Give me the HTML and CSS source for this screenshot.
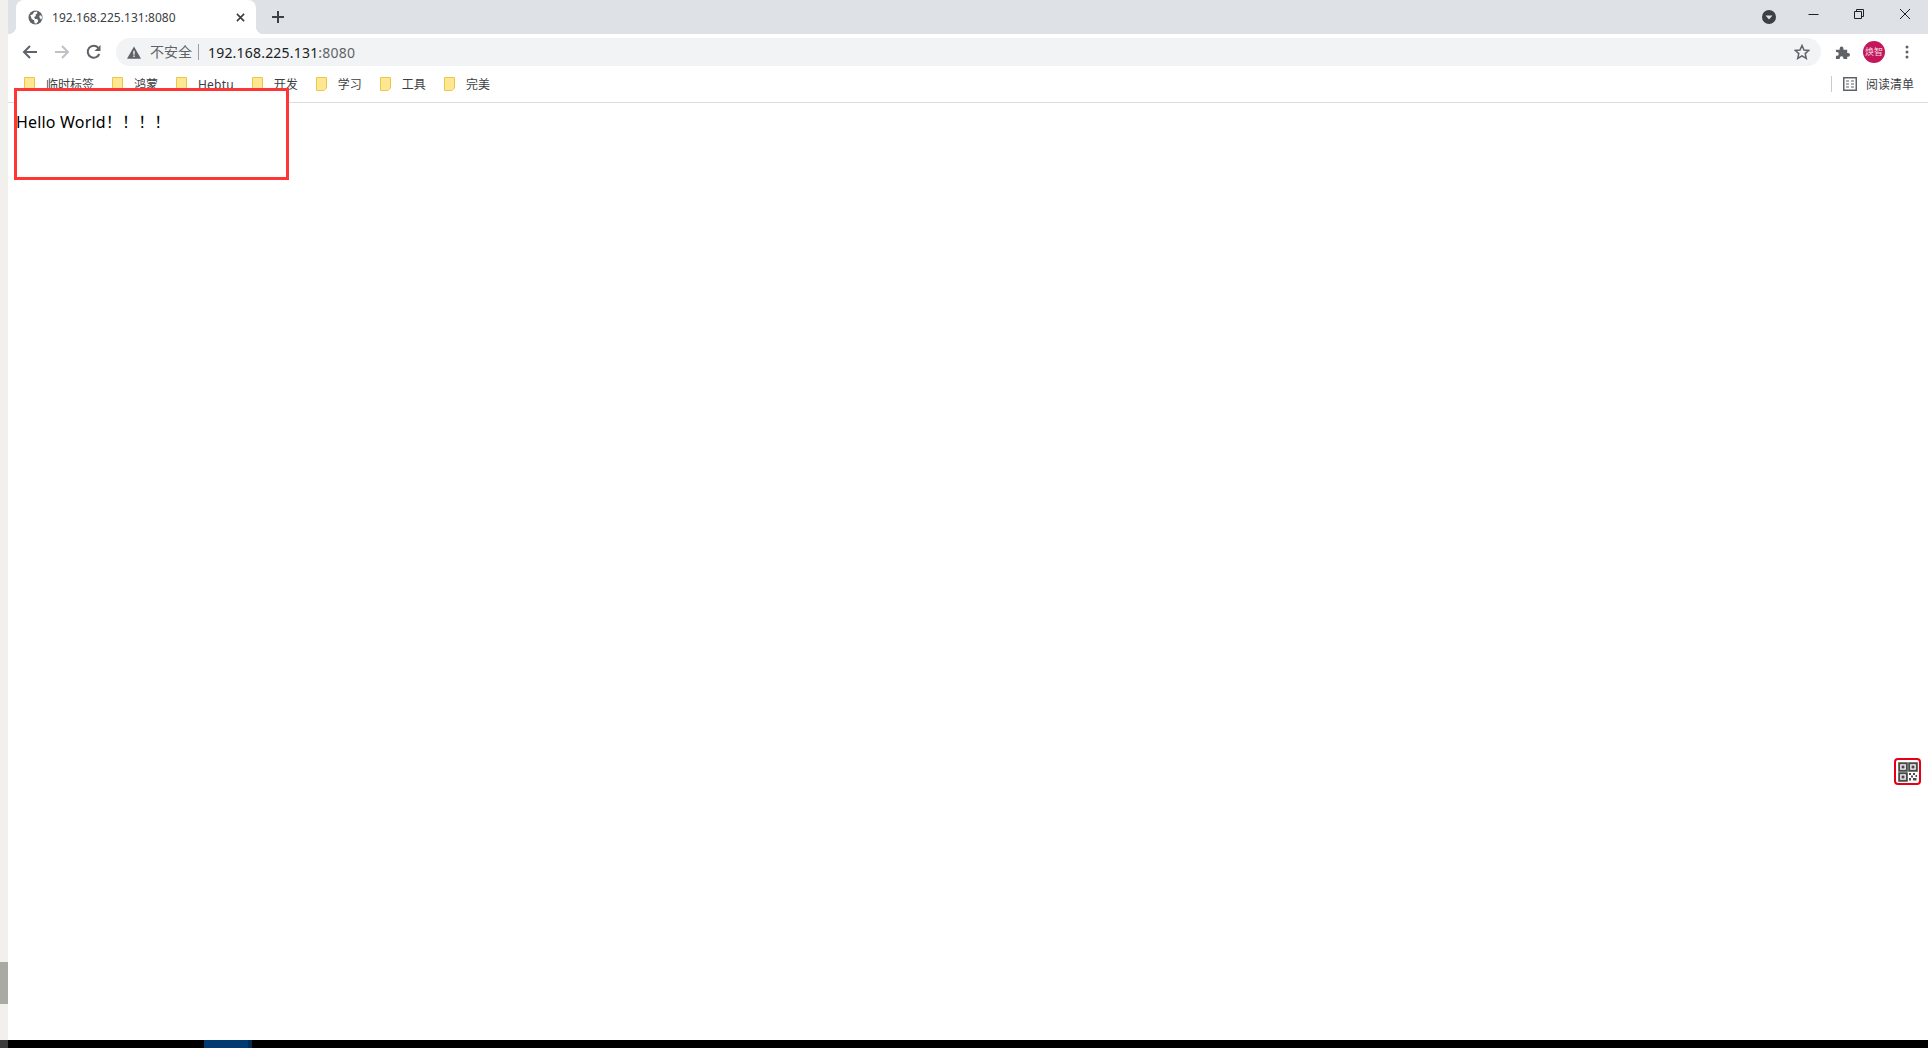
FILE: index.html
```html
<!DOCTYPE html>
<html lang="zh-CN">
<head>
<meta charset="utf-8">
<title>192.168.225.131:8080</title>
<link rel="stylesheet" href="styles.css">
</head>
<body>
<div class="desktop">
  <div class="side-strip"><div class="side-thumb"></div></div>
  <div class="browser">
    <div class="tabstrip">
      <div class="tab">
        <svg class="favicon" viewBox="0 0 16 16"><circle cx="8" cy="8" r="7.5" fill="#5f6368"/><path d="M2.5 5.5 5 4.5 6.5 2 9.5 1.5 10 3.5 8 5 8.5 6.5 6.5 7.5 7.5 9.5 10 9.5 11 12 9 14.5 7 14 6.5 11 4 9.5Z M12 6 14 5.5 15 8 14 10.5 12.5 8.5Z" fill="#fff"/></svg>
        <span class="tab-title">192.168.225.131:8080</span>
        <svg class="tab-close" viewBox="0 0 10 10"><path d="M1 1 9 9M9 1 1 9" stroke="#3c4043" stroke-width="1.8" fill="none"/></svg>
      </div>
      <svg class="new-tab" viewBox="0 0 12 12"><path d="M6 0V12M0 6H12" stroke="#3c4043" stroke-width="2" fill="none"/></svg>
      <div class="window-controls">
        <svg class="tab-search" viewBox="0 0 14 14"><circle cx="7" cy="7" r="7" fill="#3c4043"/><path d="M3.5 5.5H10.500L7 9.500Z" fill="#dee1e6"/></svg>
        <svg class="win-min" viewBox="0 0 10 10"><path d="M0 5.500H10" stroke="#202124" stroke-width="1" fill="none"/></svg>
        <svg class="win-restore" viewBox="0 0 10 10"><path d="M.5 2.500H7.500V9.500H.5ZM2.500 2.500V.5H9.500V7.500H7.500" stroke="#202124" stroke-width="1" fill="none"/></svg>
        <svg class="win-close" viewBox="0 0 10 10"><path d="M0 0 10 10M10 0 0 10" stroke="#202124" stroke-width="1" fill="none"/></svg>
      </div>
    </div>
    <div class="toolbar">
      <svg class="nav" viewBox="0 0 16 16"><path d="M15 8H2M8 2 2 8 8 14" stroke="#5f6368" stroke-width="2" fill="none"/></svg>
      <svg class="nav" viewBox="0 0 16 16"><path d="M1 8H14M8 2 14 8 8 14" stroke="#bdc1c6" stroke-width="2" fill="none"/></svg>
      <svg class="nav" viewBox="0 0 16 16"><path d="M13.300 10A6 6 0 1 1 12.200 3.700" stroke="#5f6368" stroke-width="2" fill="none"/><path d="M14.500 1V7H8.500Z" fill="#5f6368"/></svg>
      <div class="omnibox">
        <svg class="warn" viewBox="0 0 16 14"><path d="M8 0 16 14H0Z" fill="#5f6368"/><path d="M7.200 5H8.800V9.500H7.200ZM7.200 10.500H8.800V12H7.200Z" fill="#f1f3f4"/></svg>
        <span class="insecure">不安全</span>
        <span class="omni-sep"></span>
        <span class="url">192.168.225.131<span class="url-port">:8080</span></span>
        <svg class="star" viewBox="0 0 16 16"><path d="M8 1.500 10 6 14.800 6.400 11.200 9.600 12.300 14.400 8 11.800 3.700 14.400 4.800 9.600 1.200 6.400 6 6Z" stroke="#5f6368" stroke-width="1.500" fill="none"/></svg>
      </div>
      <svg class="puzzle" viewBox="0 0 16 16"><path d="M1 5H5V3.500A2 2 0 0 1 9 3.500V5H13V8.500H14A2 2 0 0 1 14 12.500H13V15H9V14A2 2 0 0 0 5 14V15H1V11.500H2A2 2 0 0 0 2 7.500H1Z" fill="#5f6368"/></svg>
      <div class="avatar">焕智</div>
      <svg class="dots" viewBox="0 0 4 14"><circle cx="2" cy="2" r="1.500" fill="#5f6368"/><circle cx="2" cy="7" r="1.500" fill="#5f6368"/><circle cx="2" cy="12" r="1.500" fill="#5f6368"/></svg>
    </div>
    <div class="bookmarks">
      <div class="bookmark"><svg class="folder" viewBox="0 0 11 14"><path d="M.5.5H10.500V11L8 13.500H.5Z" fill="#fee792" stroke="#eec643"/></svg><span>临时标签</span></div>
      <div class="bookmark"><svg class="folder" viewBox="0 0 11 14"><path d="M.5.5H10.500V11L8 13.500H.5Z" fill="#fee792" stroke="#eec643"/></svg><span>鸿蒙</span></div>
      <div class="bookmark"><svg class="folder" viewBox="0 0 11 14"><path d="M.5.5H10.500V11L8 13.500H.5Z" fill="#fee792" stroke="#eec643"/></svg><span class="bm-latin">Hebtu</span></div>
      <div class="bookmark"><svg class="folder" viewBox="0 0 11 14"><path d="M.5.5H10.500V11L8 13.500H.5Z" fill="#fee792" stroke="#eec643"/></svg><span>开发</span></div>
      <div class="bookmark"><svg class="folder" viewBox="0 0 11 14"><path d="M.5.5H10.500V11L8 13.500H.5Z" fill="#fee792" stroke="#eec643"/></svg><span>学习</span></div>
      <div class="bookmark"><svg class="folder" viewBox="0 0 11 14"><path d="M.5.5H10.500V11L8 13.500H.5Z" fill="#fee792" stroke="#eec643"/></svg><span>工具</span></div>
      <div class="bookmark"><svg class="folder" viewBox="0 0 11 14"><path d="M.5.5H10.500V11L8 13.500H.5Z" fill="#fee792" stroke="#eec643"/></svg><span>完美</span></div>
      <div class="reading-list">
        <span class="rl-sep"></span>
        <svg class="rl-icon" viewBox="0 0 14 14"><path d="M.75.75H13.250V13.250H.75Z" stroke="#5f6368" stroke-width="1.500" fill="none"/><path d="M3 4H6M3 7H6M3 10H6M8 4H11M8 7H11M8 10H11" stroke="#5f6368" stroke-width="1.200" fill="none"/></svg>
        <span>阅读清单</span>
      </div>
    </div>
    <div class="page"></div>
  </div>
</div>
<div class="taskbar">
  <div class="task-start"></div>
  <div class="task-active"></div>
  <div class="task-clock">10:30:24</div>
</div>
<div class="highlight">Hello World！！！！</div>
<div class="qr-button">
  <svg viewBox="0 0 20 20"><path d="M1.200 1.200H8.800V8.800H1.200ZM11.200 1.200H18.800V8.800H11.200ZM1.200 11.200H8.800V18.800H1.200Z" stroke="#4a4a4a" stroke-width="2" fill="none"/><path d="M3.500 3.500H6.500V6.500H3.500ZM13.500 3.500H16.500V6.500H13.500ZM3.500 13.500H6.500V16.500H3.500ZM11 11H13V13H11ZM15 11H17V13H15ZM13 13.500H15V15.500H13ZM11 16H13V18.500H11ZM15 16H18.500V18.500H15ZM17.500 13H19V15H17.500Z" fill="#4a4a4a"/></svg>
</div>
</body>
</html>
```

FILE: styles.css
```css
html, body {
  margin: 0;
  height: 100%;
  overflow: hidden;
  background: #fff;
}
body {
  display: flex;
  flex-direction: column;
  font-family: "Noto Sans", "Noto Sans CJK SC", sans-serif;
  position: relative;
}
.desktop {
  flex: 1;
  display: flex;
  min-height: 0;
}
.side-strip {
  width: 8px;
  background: #f1f0ec;
  flex: none;
}
.side-thumb {
  margin-top: 962px;
  height: 42px;
  background: #aaaaa4;
}
.browser {
  flex: 1;
  display: flex;
  flex-direction: column;
  min-width: 0;
}
.tabstrip {
  height: 34px;
  flex: none;
  background: #dee1e6;
  display: flex;
  align-items: center;
  padding-left: 8px;
}
.tab {
  width: 240px;
  height: 34px;
  box-sizing: border-box;
  background: #fff;
  border-radius: 8px 8px 0 0;
  display: flex;
  align-items: center;
  padding: 0 11px 0 12px;
  position: relative;
}
.tab::before,
.tab::after {
  content: "";
  position: absolute;
  bottom: 0;
  width: 8px;
  height: 8px;
}
.tab::before {
  left: -8px;
  background: radial-gradient(circle at 0 0, transparent 8px, #fff 8.5px);
}
.tab::after {
  right: -8px;
  background: radial-gradient(circle at 100% 0, transparent 8px, #fff 8.5px);
}
.favicon {
  width: 15px;
  height: 15px;
  flex: none;
}
.tab-title {
  flex: 1;
  margin-left: 9px;
  font-size: 12px;
  letter-spacing: .05px;
  color: #3c4043;
  white-space: nowrap;
}
.tab-close {
  width: 9px;
  height: 9px;
  flex: none;
}
.new-tab {
  width: 12px;
  height: 12px;
  margin-left: 16px;
  flex: none;
}
.window-controls {
  margin-left: auto;
  display: flex;
  align-items: center;
  padding-right: 18px;
}
.tab-search {
  width: 14px;
  height: 14px;
  margin-right: 32px;
}
.win-min {
  width: 11px;
  height: 10px;
  margin-right: 35px;
  margin-top: -6px;
}
.win-restore {
  width: 10px;
  height: 10px;
  margin-right: 36px;
  margin-top: -6px;
}
.win-close {
  width: 10px;
  height: 10px;
  margin-top: -6px;
}
.toolbar {
  height: 34px;
  flex: none;
  box-sizing: border-box;
  background: #fff;
  display: flex;
  align-items: center;
  padding: 2px 0 0 14px;
}
.nav {
  width: 16px;
  height: 16px;
  margin-right: 16px;
  flex: none;
}
.nav:nth-of-type(3) {
  margin-right: 14px;
}
.omnibox {
  width: 1705px;
  height: 28px;
  flex: none;
  background: #f1f3f4;
  border-radius: 14px;
  display: flex;
  align-items: center;
  padding: 0 11px;
  box-sizing: border-box;
}
.warn {
  width: 14px;
  height: 13px;
  flex: none;
}
.insecure {
  margin-left: 9px;
  font-size: 14px;
  line-height: 18px;
  color: #5f6368;
  white-space: nowrap;
}
.omni-sep {
  width: 1px;
  height: 16px;
  background: #9aa0a6;
  margin: 0 9px 0 6px;
}
.url {
  flex: 1;
  font-size: 14px;
  letter-spacing: .2px;
  color: #202124;
  white-space: nowrap;
}
.url-port {
  color: #5f6368;
}
.star {
  width: 16px;
  height: 16px;
  flex: none;
}
.puzzle {
  width: 15px;
  height: 15px;
  margin-left: 14px;
  flex: none;
}
.avatar {
  width: 22px;
  height: 22px;
  border-radius: 50%;
  background: #c2185b;
  color: #f7d5e2;
  font-size: 9px;
  line-height: 22px;
  text-align: center;
  margin-left: 13px;
  flex: none;
  white-space: nowrap;
}
.dots {
  width: 4px;
  height: 14px;
  margin-left: 20px;
  flex: none;
}
.bookmarks {
  height: 35px;
  flex: none;
  box-sizing: border-box;
  background: #fff;
  border-bottom: 1px solid #dadce0;
  display: flex;
  align-items: center;
  padding-left: 16px;
  padding-bottom: 2px;
  font-size: 12px;
  color: #3c4043;
}
.bookmark {
  display: flex;
  align-items: center;
  margin-right: 18px;
  white-space: nowrap;
}
.bm-latin {
  letter-spacing: .2px;
}
.folder {
  width: 11px;
  height: 14px;
  margin-right: 11px;
  flex: none;
}
.reading-list {
  margin-left: auto;
  display: flex;
  align-items: center;
  padding-right: 14px;
  white-space: nowrap;
}
.rl-sep {
  width: 1px;
  height: 16px;
  background: #c8cacd;
  margin-right: 11px;
}
.rl-icon {
  width: 14px;
  height: 14px;
  margin-right: 9px;
}
.page {
  flex: 1;
  background: #fff;
}
.taskbar {
  height: 8px;
  flex: none;
  background: #000;
  display: flex;
  overflow: hidden;
}
.task-start {
  width: 8px;
  background: #3a3a3a;
}
.task-active {
  width: 44px;
  margin-left: 196px;
  background: #003a70;
  border-right: 4px solid #002c55;
}
.task-clock {
  margin-left: auto;
  margin-right: 12px;
  margin-top: 6px;
  color: #fff;
  font-size: 12px;
  line-height: 14px;
}
.highlight {
  position: absolute;
  left: 14px;
  top: 88px;
  width: 269px;
  height: 66px;
  padding-top: 20px;
  border: 3px solid #ff3636;
  background: #fff;
  font-size: 16px;
  line-height: 22px;
  letter-spacing: .18px;
  text-indent: -1px;
  color: #000;
  white-space: nowrap;
}
.qr-button {
  position: absolute;
  left: 1894px;
  top: 758px;
  width: 27px;
  height: 27px;
  box-sizing: border-box;
  border: 2px solid #e60012;
  border-radius: 4px;
  background: #fff;
  display: flex;
  align-items: center;
  justify-content: center;
}
.qr-button svg {
  width: 20px;
  height: 20px;
}
```
